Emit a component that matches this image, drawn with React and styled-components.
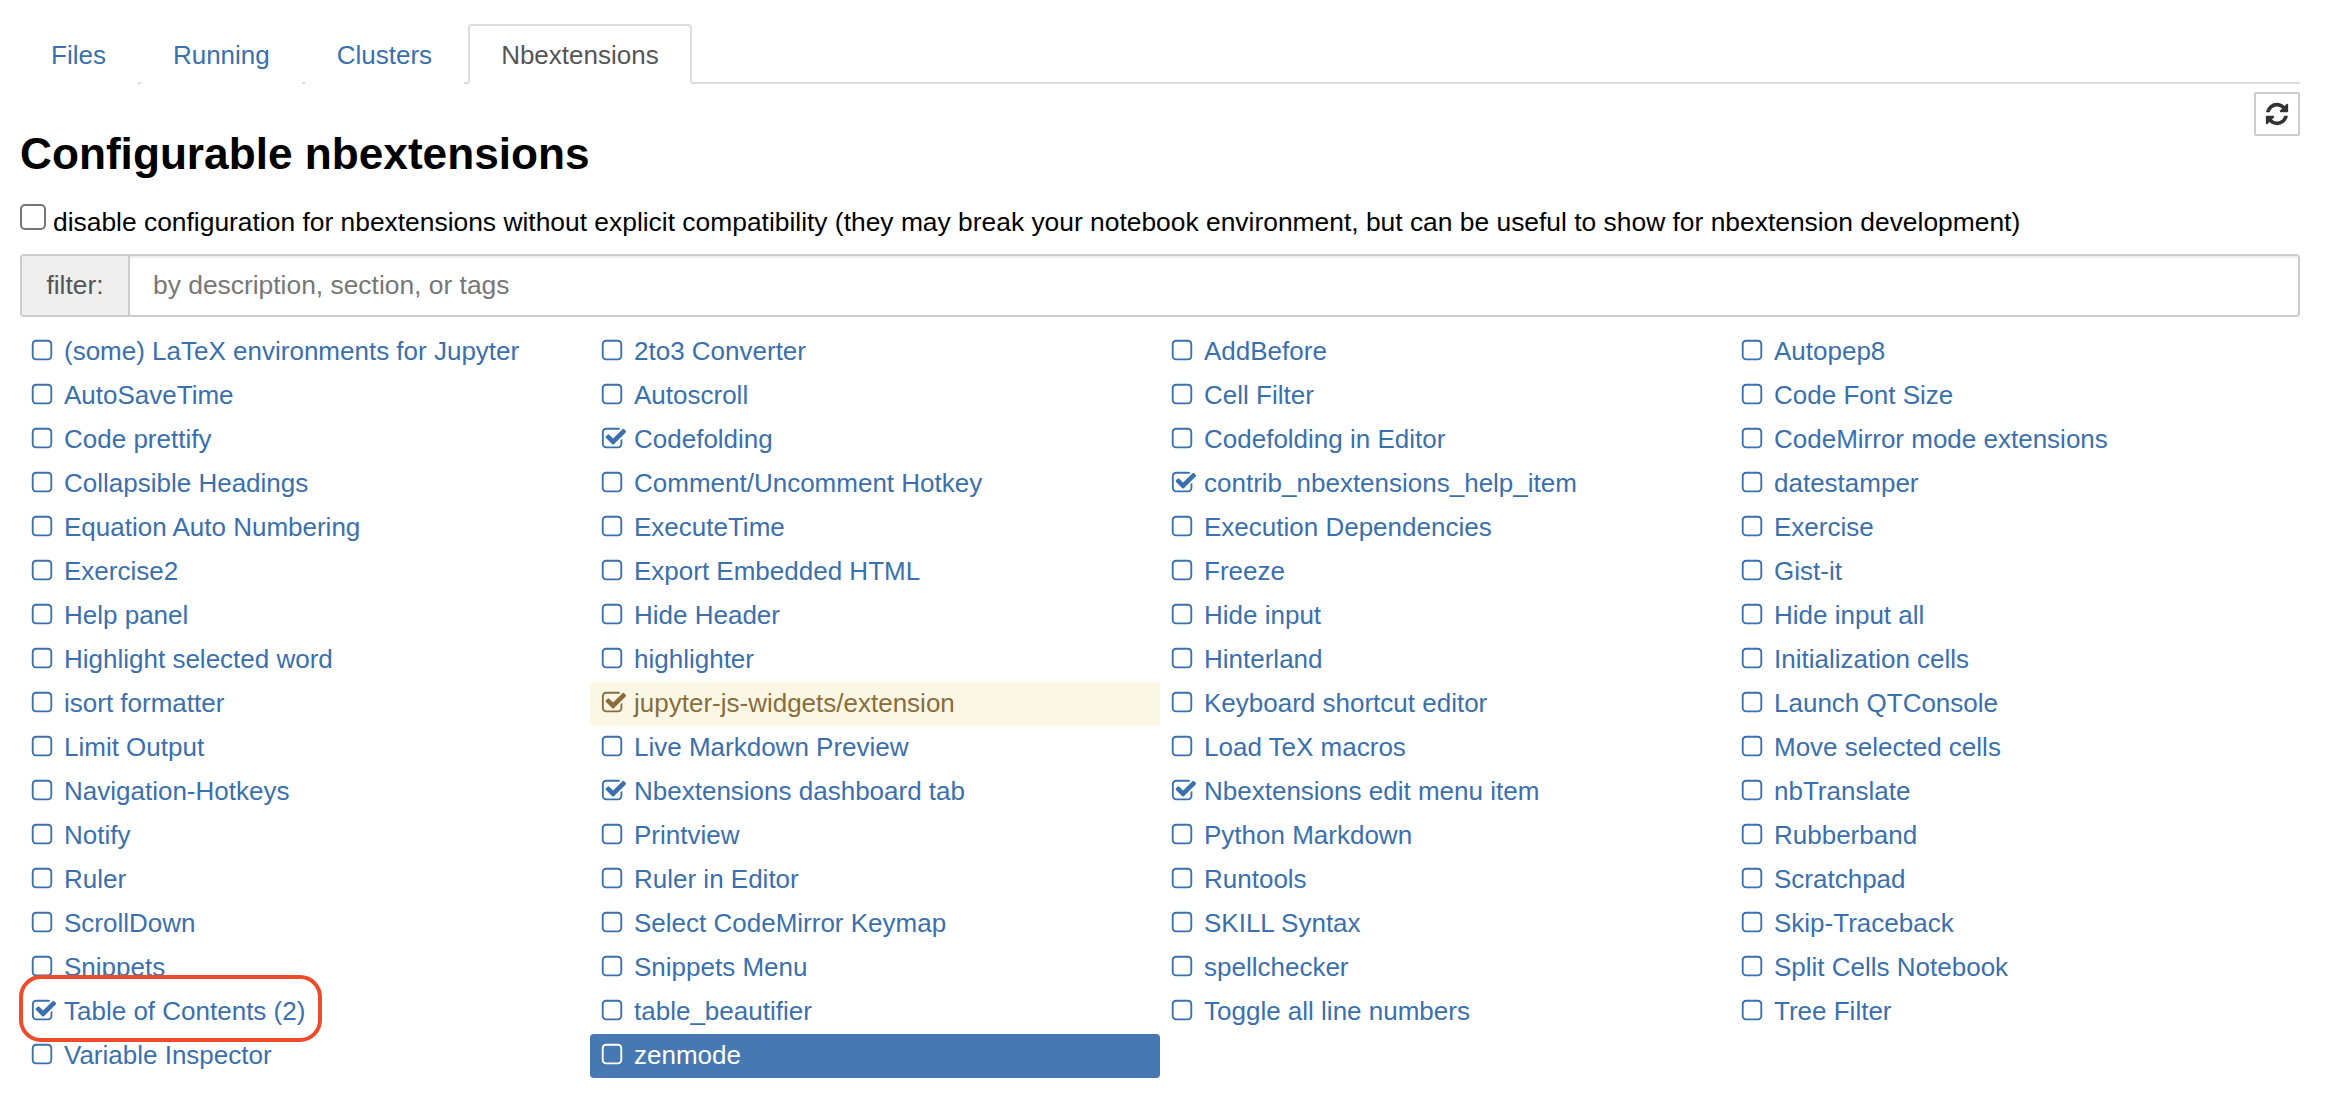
import React from "react";
import styled, { createGlobalStyle } from "styled-components";

const SQUARE_PATH =
  "M1312 256h-832q-66 0-113 47t-47 113v832q0 66 47 113t113 47h832q66 0 113-47t47-113v-832q0-66-47-113t-113-47zm288 160v832q0 119-84.5 203.5t-203.5 84.5h-832q-119 0-203.5-84.5t-84.5-203.5v-832q0-119 84.5-203.5t203.5-84.5h832q119 0 203.5 84.5t84.5 203.5z";
const CHECK_PATH =
  "M1472 930v318q0 119-84.5 203.5t-203.5 84.5h-832q-119 0-203.5-84.5t-84.5-203.5v-832q0-119 84.5-203.5t203.5-84.5h832q63 0 117 25 15 7 18 23 3 17-9 29l-49 49q-10 10-23 10-3 0-9-2-23-6-45-6h-832q-66 0-113 47t-47 113v832q0 66 47 113t113 47h832q66 0 113-47t47-113v-254q0-13 9-22l64-64q10-10 23-10 6 0 12 3 20 8 20 29zm231-489l-814 814q-24 24-57 24t-57-24l-430-430q-24-24-24-57t24-57l110-110q24-24 57-24t57 24l263 263 647-647q24-24 57-24t57 24l110 110q24 24 24 57t-24 57z";
const REFRESH_PATH =
  "M1639 1056q0 5-1 7-64 268-268 434.5t-478 166.5q-146 0-282.5-55t-243.5-157l-129 129q-19 19-45 19t-45-19-19-45v-448q0-26 19-45t45-19h448q26 0 45 19t19 45-19 45l-137 137q71 66 161 102t187 36q134 0 250-65t186-179q11-17 53-117 8-23 30-23h192q13 0 22.5 9.5t9.5 22.5zm25-800v448q0 26-19 45t-45 19h-448q-26 0-45-19t-19-45 19-45l138-138q-148-137-349-137-134 0-250 65t-186 179q-11 17-53 117-8 23-30 23h-199q-13 0-22.5-9.5t-9.5-22.5v-7q65-268 270-434.5t480-166.5q146 0 284 55.5t245 156.5l130-129q19-19 45-19t45 19 19 45z";

const COLUMNS = [
  [
    { name: "(some) LaTeX environments for Jupyter" },
    { name: "AutoSaveTime" },
    { name: "Code prettify" },
    { name: "Collapsible Headings" },
    { name: "Equation Auto Numbering" },
    { name: "Exercise2" },
    { name: "Help panel" },
    { name: "Highlight selected word" },
    { name: "isort formatter" },
    { name: "Limit Output" },
    { name: "Navigation-Hotkeys" },
    { name: "Notify" },
    { name: "Ruler" },
    { name: "ScrollDown" },
    { name: "Snippets" },
    { name: "Table of Contents (2)", checked: true, circled: true },
    { name: "Variable Inspector" },
  ],
  [
    { name: "2to3 Converter" },
    { name: "Autoscroll" },
    { name: "Codefolding", checked: true },
    { name: "Comment/Uncomment Hotkey" },
    { name: "ExecuteTime" },
    { name: "Export Embedded HTML" },
    { name: "Hide Header" },
    { name: "highlighter" },
    { name: "jupyter-js-widgets/extension", checked: true, state: "warning" },
    { name: "Live Markdown Preview" },
    { name: "Nbextensions dashboard tab", checked: true },
    { name: "Printview" },
    { name: "Ruler in Editor" },
    { name: "Select CodeMirror Keymap" },
    { name: "Snippets Menu" },
    { name: "table_beautifier" },
    { name: "zenmode", state: "active" },
  ],
  [
    { name: "AddBefore" },
    { name: "Cell Filter" },
    { name: "Codefolding in Editor" },
    { name: "contrib_nbextensions_help_item", checked: true },
    { name: "Execution Dependencies" },
    { name: "Freeze" },
    { name: "Hide input" },
    { name: "Hinterland" },
    { name: "Keyboard shortcut editor" },
    { name: "Load TeX macros" },
    { name: "Nbextensions edit menu item", checked: true },
    { name: "Python Markdown" },
    { name: "Runtools" },
    { name: "SKILL Syntax" },
    { name: "spellchecker" },
    { name: "Toggle all line numbers" },
  ],
  [
    { name: "Autopep8" },
    { name: "Code Font Size" },
    { name: "CodeMirror mode extensions" },
    { name: "datestamper" },
    { name: "Exercise" },
    { name: "Gist-it" },
    { name: "Hide input all" },
    { name: "Initialization cells" },
    { name: "Launch QTConsole" },
    { name: "Move selected cells" },
    { name: "nbTranslate" },
    { name: "Rubberband" },
    { name: "Scratchpad" },
    { name: "Skip-Traceback" },
    { name: "Split Cells Notebook" },
    { name: "Tree Filter" },
  ],
];

const ITEM_COLORS = {
  warning: { background: "#fbf7e5", color: "#8a6d3b" },
  active: { background: "#4678b2", color: "#ffffff" },
};

const App = () => {
  return (
    <Page>
      <GlobalStyle />
      <Tabs>
        <Tab>Files</Tab>
        <Tab>Running</Tab>
        <Tab>Clusters</Tab>
        <Tab $active>Nbextensions</Tab>
      </Tabs>
      <ToolRow>
        <RefreshButton>
          <svg width="26" height="26" viewBox="0 0 1792 1792" fill="currentColor">
            <path d={REFRESH_PATH} />
          </svg>
        </RefreshButton>
      </ToolRow>
      <Title>Configurable nbextensions</Title>
      <CompatRow>
        <CompatCheck type="checkbox" />
        disable configuration for nbextensions without explicit compatibility (they may break your
        notebook environment, but can be useful to show for nbextension development)
      </CompatRow>
      <FilterGroup>
        <FilterAddon>filter:</FilterAddon>
        <FilterInput placeholder="by description, section, or tags" />
      </FilterGroup>
      <ExtensionGrid>
        {COLUMNS.map((column, index) => (
          <ExtensionColumn key={index}>
            {column.map((item) => (
              <ExtensionItem key={item.name} $state={item.state}>
                {item.circled && <Callout />}
                <CheckIcon viewBox="0 0 1792 1792" fill="currentColor" $checked={item.checked}>
                  <path d={item.checked ? CHECK_PATH : SQUARE_PATH} />
                </CheckIcon>
                <ItemLabel>{item.name}</ItemLabel>
              </ExtensionItem>
            ))}
          </ExtensionColumn>
        ))}
      </ExtensionGrid>
    </Page>
  );
};

const GlobalStyle = createGlobalStyle`
  body {
    margin: 0;
    background: #ffffff;
    font-family: "Liberation Sans", Arial, sans-serif;
  }
`;

const Page = styled.div`
  box-sizing: border-box;
  width: 2336px;
  padding: 24px 36px 22px 20px;
`;

const Tabs = styled.div`
  display: flex;
  height: 60px;
  box-sizing: border-box;
  border-bottom: 2px solid #dddddd;
`;

const Tab = styled.div`
  box-sizing: border-box;
  height: 60px;
  margin-right: 3px;
  margin-left: ${(props) => (props.$active ? "1px" : "0")};
  padding: 13px ${(props) => (props.$active ? "31px" : "30px")} 0;
  font-size: 26px;
  line-height: 32px;
  color: ${(props) => (props.$active ? "#555555" : "#3a70ad")};
  background: #ffffff;
  border: 2px solid ${(props) => (props.$active ? "#dddddd" : "transparent")};
  border-bottom-color: ${(props) => (props.$active ? "#ffffff" : "transparent")};
  border-radius: 4px 4px 0 0;
  &:first-child {
    margin-left: -1px;
  }
`;

const ToolRow = styled.div`
  display: flex;
  justify-content: flex-end;
  height: 44px;
  margin-top: 8px;
`;

const RefreshButton = styled.div`
  display: flex;
  align-items: center;
  justify-content: center;
  box-sizing: border-box;
  width: 46px;
  height: 44px;
  color: #333333;
  border: 2px solid #cccccc;
  border-radius: 2px;
`;

const Title = styled.h1`
  margin: -7px 0 0;
  font-size: 44.2px;
  line-height: 50px;
  font-weight: 700;
  color: #000000;
`;

const CompatRow = styled.div`
  display: flex;
  align-items: center;
  height: 34px;
  margin-top: 26px;
  font-size: 26.4px;
  white-space: pre-wrap;
  color: #000000;
`;

const CompatCheck = styled.input`
  appearance: none;
  align-self: flex-start;
  box-sizing: border-box;
  width: 26px;
  height: 26px;
  margin: -1px 7px 0 0;
  background: #ffffff;
  border: 2px solid #767676;
  border-radius: 5px;
`;

const FilterGroup = styled.div`
  display: flex;
  box-sizing: border-box;
  height: 63px;
  margin-top: 15px;
  border: 2px solid #cccccc;
  border-radius: 4px;
  overflow: hidden;
`;

const FilterAddon = styled.div`
  display: flex;
  align-items: center;
  justify-content: center;
  box-sizing: border-box;
  width: 108px;
  font-size: 26.4px;
  color: #555555;
  background: #eeeeee;
  border-right: 2px solid #cccccc;
`;

const FilterInput = styled.input`
  flex: 1;
  padding: 0 23px;
  font-family: inherit;
  font-size: 26.4px;
  color: #555555;
  background: #ffffff;
  border: 0;
  outline: 0;
  box-shadow: inset 0 2px 2px rgba(0, 0, 0, 0.075);
  &::placeholder {
    color: #777777;
    opacity: 1;
  }
`;

const ExtensionGrid = styled.div`
  display: grid;
  grid-template-columns: repeat(4, 570px);
  margin-top: 13px;
`;

const ExtensionColumn = styled.div`
  display: flex;
  flex-direction: column;
`;

const ExtensionItem = styled.div`
  position: relative;
  display: flex;
  align-items: center;
  gap: 7px;
  box-sizing: border-box;
  height: 44px;
  padding: 0 0 2px 11px;
  font-size: 26px;
  border-radius: 4px;
  color: ${(props) => ITEM_COLORS[props.$state]?.color || "#3a70ad"};
  background: ${(props) => ITEM_COLORS[props.$state]?.background || "transparent"};
`;

const CheckIcon = styled.svg`
  position: relative;
  flex: none;
  width: 26px;
  height: 26px;
  margin-left: ${(props) => (props.$checked ? "0" : "-2px")};
  margin-right: ${(props) => (props.$checked ? "0" : "2px")};
`;

const ItemLabel = styled.span`
  position: relative;
`;

const Callout = styled.span`
  position: absolute;
  left: -1px;
  top: -15px;
  box-sizing: border-box;
  width: 303px;
  height: 67px;
  background: #ffffff;
  border: 4px solid #ee4b2b;
  border-radius: 22px;
`;

export default App;
